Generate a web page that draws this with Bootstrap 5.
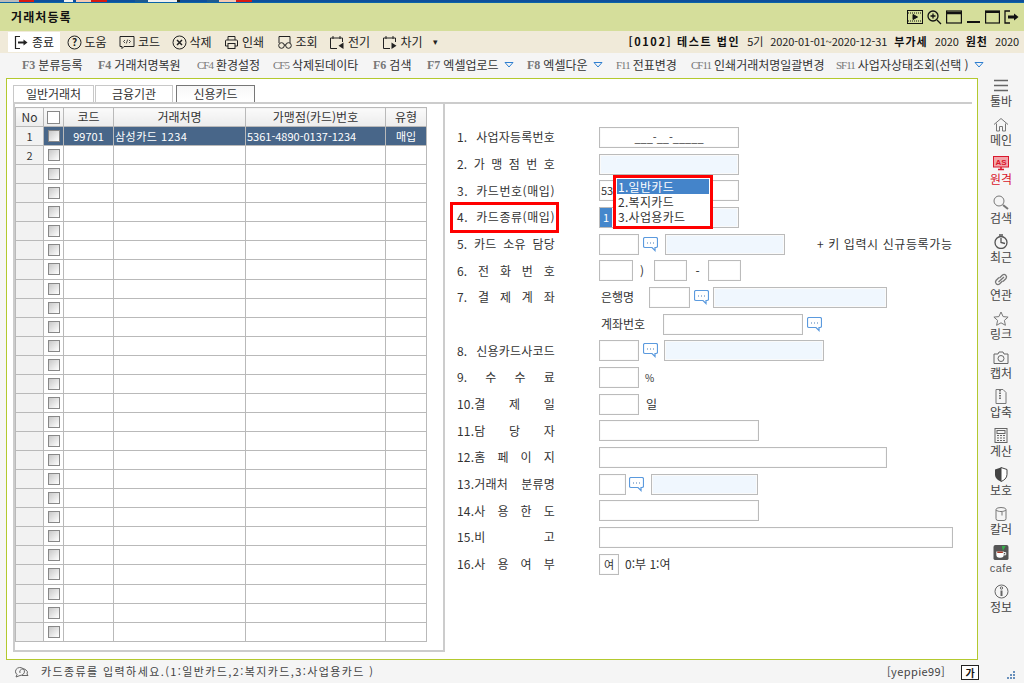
<!DOCTYPE html>
<html lang="ko">
<head>
<meta charset="utf-8">
<title>거래처등록</title>
<link href="https://cdn.jsdelivr.net/npm/bootstrap@5.3.0/dist/css/bootstrap.min.css" rel="stylesheet">
<style>
html,body{height:100%;overflow:hidden}
body{width:1024px;height:683px;background:#f5f5f5;font-family:"Noto Sans CJK KR","Liberation Sans",sans-serif;font-size:11px;color:#333;line-height:1.2}
.app-shell{width:1024px;height:683px;display:flex;flex-direction:column}
.top-strip{height:2px;background:linear-gradient(90deg,#bbb 0 19px,#d61a12 19px 34px,#0d4f9c 34px 64px,#f0f0f0 64px 73px,#0d4f9c 73px 76px,#f4c9b4 76px 91px,#d61a12 91px 107px,#0d4f9c 107px 135px,#1d5a90 135px 148px,#f0f0f0 148px 177px,#222 177px 180px,#0d4f9c 180px 207px,#1d5a90 207px 219px,#f4c9b4 219px 236px,#d61a12 236px 252px,#0d4f9c 252px 1024px)}
.blue-line{height:1px;background:#0a63a8}
.title-row{height:28px;background:#d5de9b;padding:0 5px 0 11px;font-weight:700;font-size:12px;letter-spacing:1.1px;color:#111}
.win-icons svg{display:block}
.tool-row{height:22px;background:#f0ead9;padding-left:8px;padding-right:5px;flex:none}
.tool-btn{height:20px;width:52.5px;padding-left:6px;gap:3px;font-size:12px;color:#222;white-space:nowrap}
.tool-btn.is-on{background:#fff;width:52px;margin-right:.5px}
.tool-more{margin-left:5px;font-size:9px;color:#222}
.co-info{font-size:11px;letter-spacing:-.1px;color:#222;gap:7px;white-space:nowrap}
.co-info b{font-weight:700;color:#111;letter-spacing:1px}
.co-info b.co-name{letter-spacing:1.6px}
.fkey-row{height:25px;background:#f5f5f5;flex:none;position:relative;padding-left:22px;white-space:nowrap;font-size:12px;color:#333}
.fkey{flex:none;display:flex;align-items:center;gap:3px}
.fkey i{font-style:normal;font-family:"Liberation Serif",serif;font-weight:700;color:#777;font-size:12px}
.fkey i.thin{font-weight:400;letter-spacing:-1px;font-size:11px}
.fkey svg{margin-left:2px}
.fk54{width:54px}.fk75{width:75px}.fk76{width:76px}.fk89{width:89px}.fk99{width:99px}.fk100{width:100px}.fk145{width:145px}
.body-row{height:582px;flex:none;padding-left:6px}
.main-panel{width:972px;height:582px;background:#fff;border:1px solid #b3c92f;padding:7px 0 0 6px;flex:none}
.tab-strip{height:18px;width:959px;border-bottom:2px solid #ccc;gap:1px;align-items:flex-end}
.tab-item{height:17px;border:1px solid #c8c8c8;border-bottom:0;background:#fff;display:flex;align-items:center;justify-content:center;font-size:12px;color:#333;margin-bottom:0}
.tab-a{width:81px}.tab-b{width:78px}.tab-c{width:79px;background:linear-gradient(#f7f7f7,#fff);border-color:#777;border-bottom:0;margin-left:2px}
.work-area{height:548px;width:959px}
.grid-box{width:432px;height:548px;border:2px solid #ccc;border-top:0;padding:3px 0 0 0;flex:none}
.grid-table{table-layout:fixed;width:411px;border-collapse:collapse;font-size:11px;background:#fff}
.c28{width:28px}.c20{width:20px}.c50{width:50px}.c132{width:132px}.c140{width:140px}.c41{width:41px}
.grid-table th,.grid-table td{border:1px solid #b9b9b9;height:19.07px;padding:0 1px;text-align:center;font-weight:400;overflow:hidden;white-space:nowrap;color:#333;line-height:1}
.grid-table thead th{background:linear-gradient(#fafafa,#ececec);height:19px;font-size:12px}
.grid-table td.row-no{background:#f2f2f2}
.grid-table tr.row-sel td:not(.row-no){background:#486689;color:#fff}
.grid-table td.left{text-align:left}
.grid-table td.wide-name{letter-spacing:.5px}
.mini-check{display:block;width:12px;height:12px;margin:auto;border:1px solid #888;background:linear-gradient(135deg,#c8c8c8,#fff)}
th .mini-check{background:#fff;width:13px;height:13px}
.form-pane{padding:20px 0 0 12px;flex:1;position:relative}
.form-line{height:26.7px;display:flex;align-items:center;position:relative;flex:none}
.form-lab{width:98px;margin-right:44px;text-align:justify;text-align-last:justify;font-size:12px;color:#333;white-space:normal;letter-spacing:.2px;flex:none}
.form-lab.lab-wide{letter-spacing:.55px}
.fake-field{height:21px;border:1px solid #bbb;background:#fff;flex:none;display:flex;align-items:center;font-size:11px;color:#333;padding:0 1px;overflow:hidden;box-shadow:inset 0 0 0 1px #fafafa}
.fake-field.tint{background:#f0f7fe}
.fake-field.flush{padding:0}
.f20{width:20px}.f27{width:27px}.f33{width:33px}.f34{width:34px}.f40{width:40px}.f41{width:41px}.f107{width:107px}.f120{width:120px}.f140{width:140px}.f160{width:160px}.f174{width:174px}.f288{width:288px}.f354{width:354px}
.centered{justify-content:center}
.ml3{margin-left:3px}.ml4{margin-left:4px}.ml6{margin-left:6px}.ml7{margin-left:7px}.ml32{margin-left:32px}
.chat{flex:none}
.tail-text{font-size:12px;color:#333;flex:none}
.tail-hint{letter-spacing:.6px}
.tail-pct{font-size:10px}
.t-paren{width:21px;padding-left:7px}
.t-dash{width:21px;text-align:center}
.t-bank{width:50px;padding-left:2px}
.t-acct{width:64px;padding-left:2px}
.sel-one{background:#4487cc;color:#fff;width:12px;height:19px;display:flex;align-items:center;justify-content:center;flex:none}
.pop-list{position:absolute;left:156px;top:-29px;width:100px;height:54px;border:3px solid #f00;background:#fff;padding:1px;z-index:3;font-size:12px}
.pop-list div{height:15px;line-height:15px;padding-left:1px;letter-spacing:.3px;color:#333}
.pop-list div.on{background:#4484ca;color:#fff}
.mark-box{position:absolute;left:-7px;top:-2px;width:109px;height:31px;border:3px solid #f00;z-index:2;pointer-events:none}
.side-rail{width:46px;flex:none}
.rail-item{height:38.9px;display:flex;flex-direction:column;align-items:center;justify-content:flex-start;color:#444;font-size:12px;line-height:14px;flex:none}
.rail-item svg{display:block;margin-bottom:1px;height:15px}
.rail-item.hot{color:#d9182d}
.rail-cafe{font-family:"Liberation Sans",sans-serif;font-size:11px;letter-spacing:.4px;color:#555}
.status-row{height:23px;flex:none;padding-left:14px;padding-right:5px;font-size:11px;color:#444;letter-spacing:1.4px;position:relative}
.status-ico{margin-right:12px}
.user-tag{position:absolute;left:887px;top:5px;letter-spacing:.4px}
.ime-box{position:absolute;left:961px;top:5px;width:18px;height:15px;border:1px solid #222;background:#fff;font-weight:700;font-size:10px;color:#111;text-align:center;line-height:13px;letter-spacing:0}
.grip{position:absolute;left:1006px;top:10px}
.defs-holder{position:absolute;width:0;height:0}
</style>
</head>
<body>
<div class="app-shell">
  <div class="top-strip"></div><div class="blue-line"></div>
  <div class="title-row d-flex align-items-center justify-content-between">
    <span>거래처등록</span>
    <div class="win-icons d-flex align-items-center gap-1">
      <svg width="16" height="14" viewBox="0 0 16 14" fill="none" stroke="#111"><rect x=".5" y=".5" width="15" height="13"/><path d="M1 3h14M1 11h14" stroke-dasharray="1 1"/><path d="M6 4.500v5l4.500-2.500z" fill="#111"/></svg>
      <svg width="15" height="15" viewBox="0 0 15 15" fill="none" stroke="#111" stroke-width="1.300"><circle cx="6" cy="6" r="5"/><path d="M6 3.500v5M3.500 6h5M10 10l4 4"/></svg>
      <svg width="16" height="14" viewBox="0 0 16 14" fill="none" stroke="#111" stroke-width="1.200"><rect x=".6" y="1" width="14.800" height="12"/><path d="M1 3h14" stroke-width="2.500"/></svg>
      <svg width="15" height="14" viewBox="0 0 15 14"><rect x="1" y="11" width="13" height="2" fill="#111"/></svg>
      <svg width="15" height="14" viewBox="0 0 15 14" fill="none" stroke="#111" stroke-width="1.200"><rect x=".6" y="1" width="13.800" height="12"/><path d="M1 2h13" stroke-width="2"/></svg>
      <svg width="15" height="14" viewBox="0 0 15 14" fill="none" stroke="#111" stroke-width="1.300"><path d="M6 1H1v12h5"/><path d="M4 7h7" stroke-width="3"/><path d="M10 3.500l4.500 3.500-4.500 3.500z" fill="#111" stroke="none"/></svg>
    </div>
  </div>
  <div class="tool-row d-flex align-items-center justify-content-between">
    <div class="d-flex align-items-center">
      <div class="tool-btn is-on d-flex align-items-center"><svg width="15" height="15" viewBox="0 0 15 15" fill="none" stroke="#222" stroke-width="1.200"><path d="M6 1.500H1.500v12H6"/><path d="M4 7.500h6" stroke-width="2"/><path d="M9.500 4.500l4 3-4 3z" fill="#222" stroke="none"/></svg>종료</div>
      <div class="tool-btn d-flex align-items-center"><svg width="15" height="15" viewBox="0 0 15 15" fill="none" stroke="#222"><circle cx="7.500" cy="7.500" r="6.500"/><text x="7.500" y="11" text-anchor="middle" font-size="10" font-weight="700" fill="#222" stroke="none">?</text></svg>도움</div>
      <div class="tool-btn d-flex align-items-center"><svg width="16" height="15" viewBox="0 0 16 15" fill="none" stroke="#222"><path d="M1 1.500h14v10H5l-2 2v-2H1z"/><path d="M6 5L4.500 6.500 6 8M10 5l1.500 1.500L10 8M8.700 4.500L7.300 8.500" stroke-width=".8"/></svg>코드</div>
      <div class="tool-btn d-flex align-items-center"><svg width="15" height="15" viewBox="0 0 15 15" fill="none" stroke="#222"><circle cx="7.500" cy="7.500" r="6.500"/><path d="M5 5l5 5M10 5l-5 5" stroke-width="1.500"/></svg>삭제</div>
      <div class="tool-btn d-flex align-items-center"><svg width="15" height="15" viewBox="0 0 15 15" fill="none" stroke="#222"><path d="M4 5V1.500h7V5M4 11H1.500V6a1 1 0 0 1 1-1h10a1 1 0 0 1 1 1v5H11"/><rect x="4" y="8.500" width="7" height="5"/></svg>인쇄</div>
      <div class="tool-btn d-flex align-items-center"><svg width="16" height="15" viewBox="0 0 16 15" fill="none" stroke="#222"><path d="M2 8V1.500h11V8"/><circle cx="4.500" cy="10.500" r="2.800"/><circle cx="11.500" cy="10.500" r="2.800"/><path d="M7 10h2"/></svg>조회</div>
      <div class="tool-btn d-flex align-items-center"><svg width="16" height="15" viewBox="0 0 16 15" fill="none" stroke="#222"><path d="M1.500 3h12v4M8 13.500H1.500V3M4 1v3M11 1v3"/><path d="M14.500 7.500v6.500L9.500 10.800z" fill="#222" stroke="none"/></svg>전기</div>
      <div class="tool-btn d-flex align-items-center"><svg width="16" height="15" viewBox="0 0 16 15" fill="none" stroke="#222"><path d="M1.500 3h12v4M8 13.500H1.500V3M4 1v3M11 1v3"/><path d="M9.500 7.500v6.500l5-3.200z" fill="#222" stroke="none"/></svg>차기</div>
      <div class="tool-more">▾</div>
    </div>
    <div class="co-info d-flex align-items-center"><b class="co-name">[0102] 테스트 법인</b><span>5기</span><span>2020-01-01~2020-12-31</span><b>부가세</b><span>2020</span><b>원천</b><span>2020</span></div>
  </div>
  <div class="fkey-row d-flex align-items-center">
    <div class="fkey fk76"><i>F3</i>분류등록</div>
    <div class="fkey fk99"><i>F4</i>거래처명복원</div>
    <div class="fkey fk76"><i class="thin">CF4</i>환경설정</div>
    <div class="fkey fk100"><i class="thin">CF5</i>삭제된데이타</div>
    <div class="fkey fk54"><i>F6</i>검색</div>
    <div class="fkey fk100"><i>F7</i>엑셀업로드<svg width="10" height="6" viewBox="0 0 10 6" fill="none" stroke="#2f7fd0"><path d="M1 .5h8L5 5z"/></svg></div>
    <div class="fkey fk89"><i>F8</i>엑셀다운<svg width="10" height="6" viewBox="0 0 10 6" fill="none" stroke="#2f7fd0"><path d="M1 .5h8L5 5z"/></svg></div>
    <div class="fkey fk75"><i class="thin">F11</i>전표변경</div>
    <div class="fkey fk145"><i class="thin">CF11</i>인쇄거래처명일괄변경</div>
    <div class="fkey"><i class="thin">SF11</i>사업자상태조회(선택 )<svg width="10" height="6" viewBox="0 0 10 6" fill="none" stroke="#2f7fd0"><path d="M1 .5h8L5 5z"/></svg></div>
  </div>
  <div class="body-row d-flex">
    <div class="main-panel">
      <div class="tab-strip d-flex">
        <div class="tab-item tab-a">일반거래처</div><div class="tab-item tab-b">금융기관</div><div class="tab-item tab-c">신용카드</div>
      </div>
      <div class="work-area d-flex">
        <div class="grid-box">
          <table class="grid-table">
            <colgroup><col class="c28"><col class="c20"><col class="c50"><col class="c132"><col class="c140"><col class="c41"></colgroup>
            <thead><tr><th>No</th><th><span class="mini-check"></span></th><th>코드</th><th>거래처명</th><th>가맹점(카드)번호</th><th>유형</th></tr></thead>
            <tbody id="gridB">
              <tr class="row-sel"><td class="row-no">1</td><td><span class="mini-check"></span></td><td>99701</td><td class="left wide-name">삼성카드 1234</td><td class="left">5361-4890-0137-1234</td><td>매입</td></tr>
              <tr><td class="row-no">2</td><td><span class="mini-check"></span></td><td></td><td></td><td></td><td></td></tr>
            </tbody>
          </table>
        </div>
        <div class="form-pane">
          <div class="form-line"><div class="form-lab">1. 사업자등록번호</div><div class="fake-field f140 centered">___-__-_____</div></div>
          <div class="form-line"><div class="form-lab">2. 가 맹 점 번 호</div><div class="fake-field tint f140"></div></div>
          <div class="form-line"><div class="form-lab lab-wide">3. 카드번호(매입)</div><div class="fake-field f140">53</div></div>
          <div class="form-line"><div class="form-lab lab-wide">4. 카드종류(매입)</div><div class="fake-field tint flush f140"><span class="sel-one">1</span></div><div class="mark-box"></div><div class="pop-list"><div class="on">1.일반카드</div><div>2.복지카드</div><div>3.사업용카드</div></div></div>
          <div class="form-line"><div class="form-lab">5. 카드 소유 담당</div><div class="fake-field f40"></div><svg class="ml4 chat" width="15" height="15"><use href="#bub"/></svg><div class="fake-field tint f120 ml7"></div><span class="tail-text tail-hint ml32">+ 키 입력시 신규등록가능</span></div>
          <div class="form-line"><div class="form-lab">6. 전 화 번 호</div><div class="fake-field f34"></div><span class="tail-text t-paren">)</span><div class="fake-field f33"></div><span class="tail-text t-dash">-</span><div class="fake-field f33"></div></div>
          <div class="form-line"><div class="form-lab">7. 결 제 계 좌</div><span class="tail-text t-bank">은행명</span><div class="fake-field f41"></div><svg class="ml4 chat" width="15" height="15"><use href="#bub"/></svg><div class="fake-field tint f174 ml4"></div></div>
          <div class="form-line"><div class="form-lab"></div><span class="tail-text t-acct">계좌번호</span><div class="fake-field f140"></div><svg class="ml4 chat" width="15" height="15"><use href="#bub"/></svg></div>
          <div class="form-line"><div class="form-lab">8. 신용카드사코드</div><div class="fake-field f40"></div><svg class="ml4 chat" width="15" height="15"><use href="#bub"/></svg><div class="fake-field tint f160 ml6"></div></div>
          <div class="form-line"><div class="form-lab">9. 수 수 료</div><div class="fake-field f40"></div><span class="tail-text tail-pct ml6">%</span></div>
          <div class="form-line"><div class="form-lab">10.결 제 일</div><div class="fake-field f40"></div><span class="tail-text ml7">일</span></div>
          <div class="form-line"><div class="form-lab">11.담 당 자</div><div class="fake-field f160"></div></div>
          <div class="form-line"><div class="form-lab">12.홈 페 이 지</div><div class="fake-field f288"></div></div>
          <div class="form-line"><div class="form-lab">13.거래처 분류명</div><div class="fake-field f27"></div><svg class="ml3 chat" width="15" height="15"><use href="#bub"/></svg><div class="fake-field tint f107 ml7"></div></div>
          <div class="form-line"><div class="form-lab">14.사 용 한 도</div><div class="fake-field f160"></div></div>
          <div class="form-line"><div class="form-lab">15.비 고</div><div class="fake-field f354"></div></div>
          <div class="form-line"><div class="form-lab">16.사 용 여 부</div><div class="fake-field f20 centered">여</div><span class="tail-text ml6">0:부 1:여</span></div>
        </div>
      </div>
    </div>
    <div class="side-rail d-flex flex-column align-items-center">
      <div class="rail-item"><svg width="16" height="14" viewBox="0 0 16 14" stroke="#666" stroke-width="1.500"><path d="M1 2h14M1 7h14M1 12h14"/></svg>툴바</div>
      <div class="rail-item"><svg width="16" height="14" viewBox="0 0 16 14" fill="none" stroke="#777"><path d="M1 7l7-6 7 6M3.500 6v7.500h3V9h3v4.500h3V6"/></svg>메인</div>
      <div class="rail-item hot"><svg width="16" height="15" viewBox="0 0 16 15"><rect x=".5" y=".5" width="15" height="10.500" fill="#f2a5aa" stroke="#d9182d"/><path d="M5 13.500h6M8 11v2.500" stroke="#d9182d" stroke-width="1.500"/><text x="8" y="9" text-anchor="middle" font-size="8" font-weight="700" fill="#d9182d" font-family="Liberation Sans">AS</text></svg>원격</div>
      <div class="rail-item"><svg width="16" height="15" viewBox="0 0 16 15" fill="none" stroke="#777"><circle cx="6" cy="6" r="5"/><path d="M10 10l5 4" stroke-width="2"/></svg>검색</div>
      <div class="rail-item"><svg width="16" height="15" viewBox="0 0 16 15" fill="none" stroke="#555" stroke-width="1.300"><circle cx="8" cy="8.500" r="6"/><path d="M6 1h4M8 4v4.500l4 1"/></svg>최근</div>
      <div class="rail-item"><svg width="16" height="15" viewBox="0 0 16 15" fill="none" stroke="#777" stroke-width="1.300"><path d="M6.500 6l3-3a2.500 2.500 0 0 1 3.500 3.500l-3 3M9.500 9l-3 3A2.500 2.500 0 0 1 3 8.500l3-3M5.500 10L11 5"/></svg>연관</div>
      <div class="rail-item"><svg width="16" height="15" viewBox="0 0 16 15" fill="none" stroke="#777"><path d="M8 1l2.100 4.600 5 .5-3.700 3.300 1 4.900L8 11.800l-4.400 2.500 1-4.900L.9 6.100l5-.5z"/></svg>링크</div>
      <div class="rail-item"><svg width="16" height="14" viewBox="0 0 16 14" fill="none" stroke="#666"><path d="M1 3.500h4L6 1.500h4l1 2h4v9.500H1z"/><circle cx="8" cy="8" r="3"/></svg>캡처</div>
      <div class="rail-item"><svg width="14" height="15" viewBox="0 0 14 15" fill="none" stroke="#777"><path d="M2 .5h7l3 3v11H2z"/><path d="M6 1v9" stroke-dasharray="1.500 1" stroke-width="2"/></svg>압축</div>
      <div class="rail-item"><svg width="14" height="15" viewBox="0 0 14 15" fill="none" stroke="#666"><rect x="1" y=".5" width="12" height="14"/><rect x="3" y="2.500" width="8" height="3"/><path d="M3 7.500h8M3 10h8M3 12.500h8" stroke-dasharray="2 1"/></svg>계산</div>
      <div class="rail-item"><svg width="14" height="15" viewBox="0 0 14 15"><path d="M7 .5l6 2v5c0 3.500-3 6-6 7z" fill="#fff" stroke="#444"/><path d="M7 .5l-6 2v5c0 3.500 3 6 6 7z" fill="#444"/></svg>보호</div>
      <div class="rail-item"><svg width="14" height="15" viewBox="0 0 14 15" fill="none" stroke="#777"><path d="M2 3.500a5 2 0 0 1 10 0v9a2 2 0 0 1-2 2H4a2 2 0 0 1-2-2z"/><path d="M2 4c2 2 8 2 10 0M8 5.500v4"/></svg>칼러</div>
      <div class="rail-item"><svg width="16" height="16" viewBox="0 0 16 16"><rect width="16" height="16" rx="2" fill="#555"/><path d="M9 1l4 0-3 5z" fill="#35b04a"/><path d="M3 7h8v3a3.500 3.500 0 0 1-3.500 3.500h-1A3.500 3.500 0 0 1 3 10z" fill="#fff"/><path d="M4 7h6v1.500H4z" fill="#a3321e"/><path d="M11 8h2v2.500h-2" fill="none" stroke="#fff"/></svg><span class="rail-cafe">cafe</span></div>
      <div class="rail-item"><svg width="15" height="15" viewBox="0 0 15 15" fill="none" stroke="#666"><circle cx="7.500" cy="7.500" r="6.500"/><circle cx="7.500" cy="4" r="1.200"/><path d="M7.500 6.500v5.500" stroke-width="2"/></svg>정보</div>
    </div>
  </div>
  <div class="status-row d-flex align-items-center">
    <svg class="status-ico" width="15" height="13" viewBox="0 0 15 13" fill="none" stroke="#666"><path d="M3 9.500a4.500 4 0 1 1 3 1l-4 1.500z"/><path d="M6 8a3.500 3 0 0 1 6-3 3 3 0 0 1 1 4l1 1.500H8"/></svg>
    <span>카드종류를 입력하세요.(1:일반카드,2:복지카드,3:사업용카드 )</span>
    <span class="user-tag">[yeppie99]</span>
    <span class="ime-box">가</span>
    <svg class="grip" width="10" height="10" viewBox="0 0 10 10" fill="#3a6ea8"><circle cx="8" cy="2" r="1"/><circle cx="5" cy="5" r="1"/><circle cx="8" cy="5" r="1"/><circle cx="2" cy="8" r="1"/><circle cx="5" cy="8" r="1"/><circle cx="8" cy="8" r="1"/></svg>
  </div>
</div>
<svg class="defs-holder" width="0" height="0"><defs><symbol id="bub" viewBox="0 0 15 15"><path d="M2 .5h11a1.500 1.500 0 0 1 1.500 1.500v7a1.500 1.500 0 0 1-1.500 1.500h-1v3l-3-3H2A1.500 1.500 0 0 1 .5 9V2A1.500 1.500 0 0 1 2 .5z" fill="#fff" stroke="#5b9ade" stroke-width="1.200"/><path d="M4 6h1M7 6h1M10 6h1" stroke="#4b7fb8" stroke-width="1.200"/></symbol></defs></svg>
<script>
var b=document.getElementById('gridB');
for(var i=0;i<25;i++){var tr=document.createElement('tr');tr.innerHTML='<td class="row-no"></td><td><span class="mini-check"></span></td><td></td><td></td><td></td><td></td>';b.appendChild(tr);}
</script>
<script src="https://cdn.jsdelivr.net/npm/bootstrap@5.3.0/dist/js/bootstrap.bundle.min.js"></script>
</body>
</html>
